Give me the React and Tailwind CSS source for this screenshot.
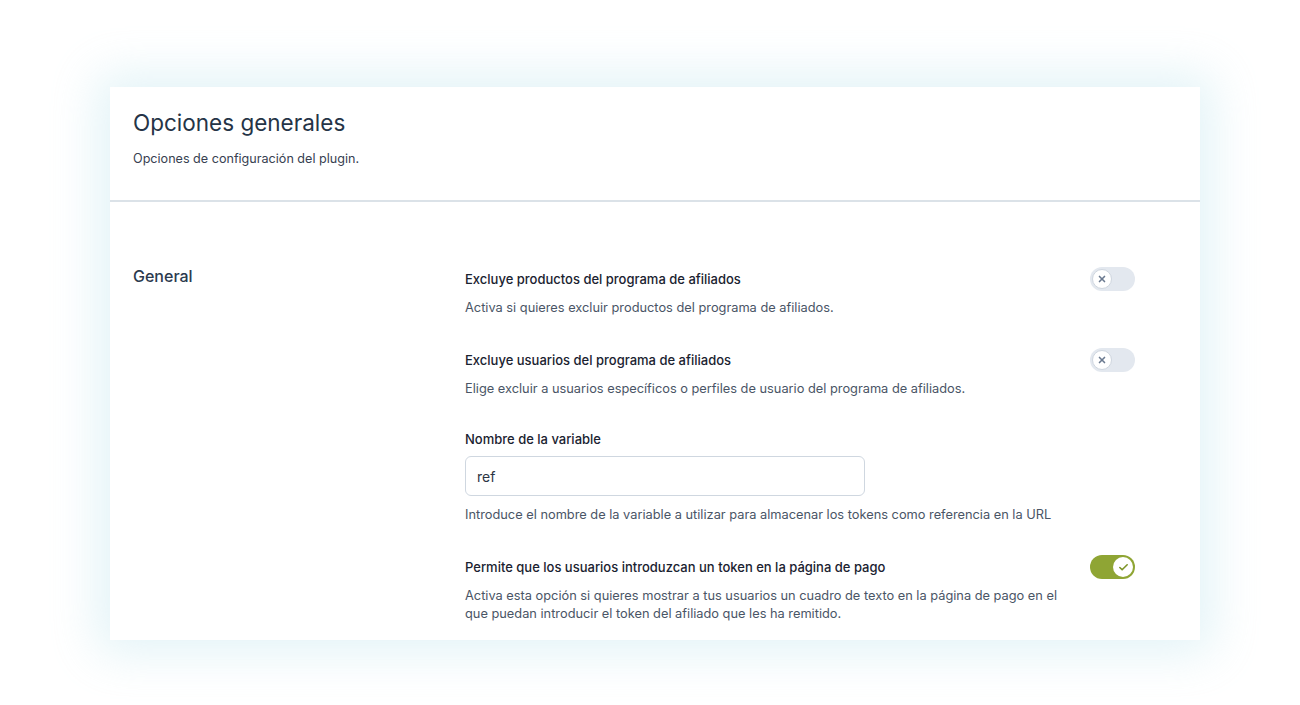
import { X, Check } from 'lucide-react'

const Toggle = ({ on }) => (
  <div
    className={`w-[45px] h-[24px] rounded-full flex items-center px-[2px] shrink-0 ${
      on ? 'bg-[#8fa534] justify-end' : 'bg-[#e3e8ef] justify-start'
    }`}
  >
    <div
      className={`w-[20px] h-[20px] rounded-full bg-white flex items-center justify-center ${
        on ? '' : 'border border-[#cfd6df]'
      }`}
    >
      {on ? (
        <Check className="w-[11px] h-[11px] text-[#7d9428]" strokeWidth={3.5} />
      ) : (
        <X className="w-[10px] h-[10px] text-[#6b7a90]" strokeWidth={4} />
      )}
    </div>
  </div>
)

const ToggleRow = ({ title, desc, on }) => (
  <div className="flex items-start justify-between">
    <div className="w-[600px]">
      <p className="text-[13px] leading-[20px] font-medium text-[#1a2230]">{title}</p>
      <p className="mt-[10px] text-[12.8px] leading-[18px] text-[#4a5566]">{desc}</p>
    </div>
    <div className="-mt-[2px]">
      <Toggle on={on} />
    </div>
  </div>
)

export default function App() {
  return (
    <div
      className="min-h-[705px] bg-white pt-[87px] overflow-hidden"
      style={{ fontFamily: 'Inter, "Noto Sans", sans-serif' }}
    >
      <div className="ml-[110px] w-[1090px] h-[553px] bg-white overflow-hidden shadow-[0_0_45px_12px_rgba(190,228,238,0.45)]">
        {/* Header */}
        <div className="px-[23px] pt-[20px] pb-[31px] border-b-2 border-[#dbe2e8]">
          <h1 className="text-[22.5px] leading-[32px] text-[#253447]">Opciones generales</h1>
          <p className="mt-[10px] text-[12.6px] leading-[20px] text-[#374151]">
            Opciones de configuración del plugin.
          </p>
        </div>

        {/* Body */}
        <div className="flex pl-[23px] pr-[65px] pt-[62px]">
          <div className="w-[332px] shrink-0">
            <h2 className="text-[16px] leading-[24px] font-medium text-[#2b3a4e]">General</h2>
          </div>
          <div className="flex-1 pt-[5px]">
            <ToggleRow
              title="Excluye productos del programa de afiliados"
              desc="Activa si quieres excluir productos del programa de afiliados."
            />
            <div className="mt-[33px]">
              <ToggleRow
                title="Excluye usuarios del programa de afiliados"
                desc="Elige excluir a usuarios específicos o perfiles de usuario del programa de afiliados."
              />
            </div>
            <div className="mt-[31px]">
              <p className="text-[13px] leading-[20px] font-medium text-[#1a2230]">Nombre de la variable</p>
              <input
                readOnly
                value="ref"
                className="mt-[7px] w-[400px] h-[40px] rounded-[6px] border border-[#cfd7e0] px-[11px] text-[14px] text-[#2b3543] outline-none"
              />
              <p className="mt-[9px] text-[12.8px] leading-[19px] text-[#4a5566]">
                Introduce el nombre de la variable a utilizar para almacenar los tokens como referencia en la URL
              </p>
            </div>
            <div className="mt-[33px]">
              <ToggleRow
                on
                title="Permite que los usuarios introduzcan un token en la página de pago"
                desc="Activa esta opción si quieres mostrar a tus usuarios un cuadro de texto en la página de pago en el que puedan introducir el token del afiliado que les ha remitido."
              />
            </div>
          </div>
        </div>
      </div>
    </div>
  )
}
